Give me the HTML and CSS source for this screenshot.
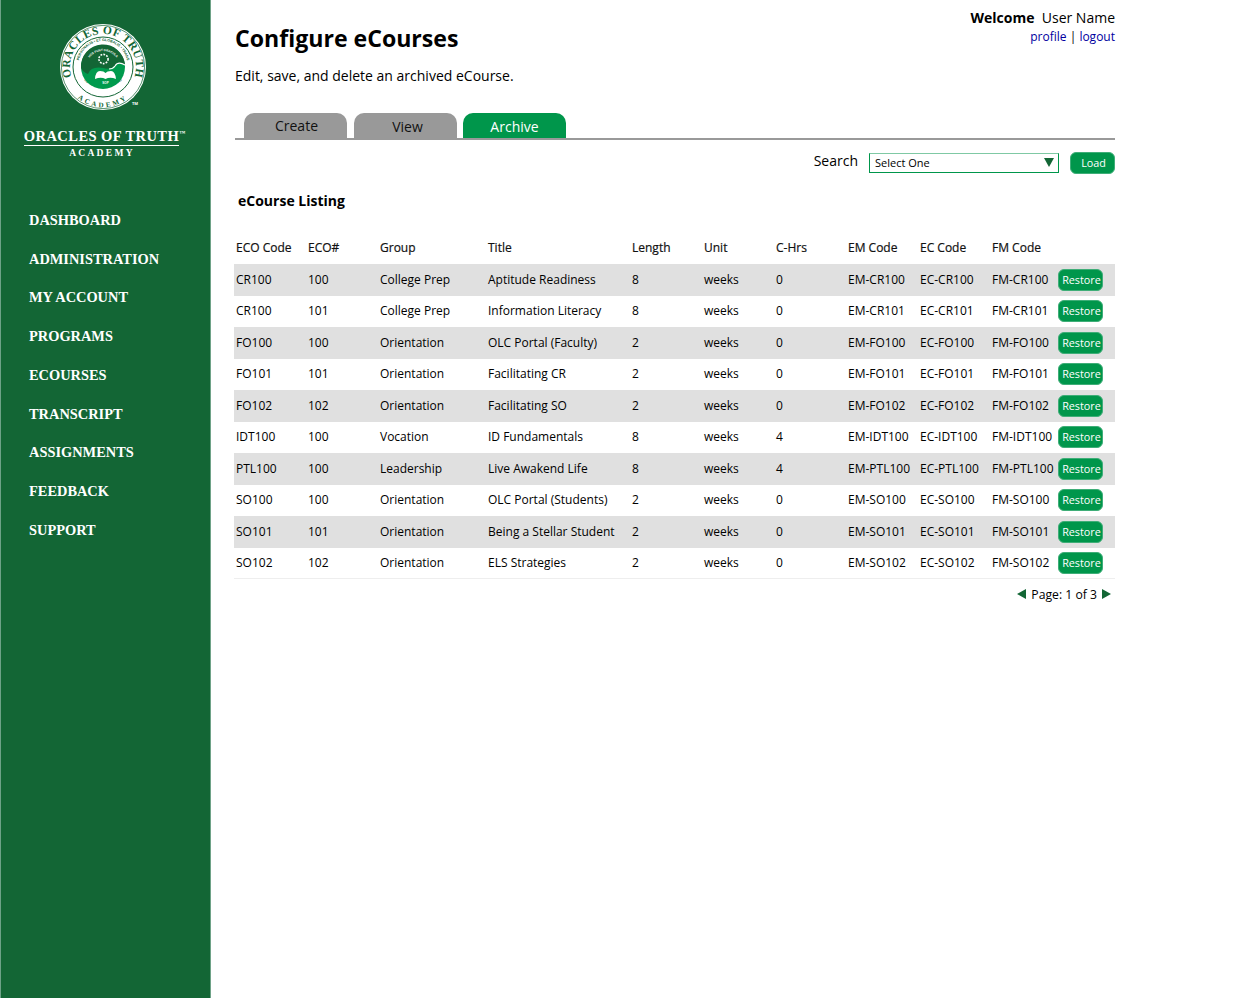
FILE: index.html
```html
<!DOCTYPE html>
<html lang="en">
<head>
    <meta charset="UTF-8">
    <title>Configure eCourses</title>
    <link rel="stylesheet" href="styles.css">
</head>
<body>
    <div class="sidebar">
        <svg class="seal" width="90" height="90" viewBox="0 0 90 90">
            <defs>
                <path id="arcTop" d="M15.1 58.9 A33 33 0 1 1 74.9 58.9"/>
                <path id="arcBottom" d="M14.4 70.7 A39.5 39.5 0 0 0 75.6 70.7"/>
                <path id="arcInner" d="M22 52 A24.5 24.5 0 1 1 68 52"/>
                <path id="arcInnerLow" d="M24 56 A27.5 27.5 0 0 0 66 56"/>
                <path id="arcMotto" d="M30 38 A17 17 0 0 1 60 38"/>
            </defs>
            <circle cx="45" cy="45" r="43" fill="#fff"/>
            <circle cx="45" cy="45" r="41.6" fill="none" stroke="#136635" stroke-width=".7"/>
            <circle cx="45" cy="45" r="30" fill="none" stroke="#136635" stroke-width="1"/>
            <text class="seal-text"><textPath href="#arcTop" startOffset="50%" text-anchor="middle">ORACLES OF TRUTH</textPath></text>
            <text class="seal-academy"><textPath href="#arcBottom" startOffset="50%" text-anchor="middle">ACADEMY</textPath></text>
            <text class="seal-small"><textPath href="#arcInner" startOffset="50%" text-anchor="middle">PERSONALIS • ET GLOBALIS • TRANS</textPath></text>
            <text class="seal-small"><textPath href="#arcInnerLow" startOffset="50%" text-anchor="middle">GENERATIO • DIVINITAS</textPath></text>
            <circle cx="45" cy="45" r="22" fill="#009a4d"/>
            <path d="M23 46 A22 22 0 0 1 67 43 Q60 39 57 44 Q52 48 45 46 Q33 44 30 52 Q25 50 23 46 Z" fill="#136635"/>
            <path d="M67 43 Q60 39 57 44 Q55 47 51 47" fill="none" stroke="#fff" stroke-width="1.2"/>
            <text class="seal-motto"><textPath href="#arcMotto" startOffset="50%" text-anchor="middle">HOS FUNT ORACULA</textPath></text>
            <circle cx="45.5" cy="37" r="4.6" fill="none" stroke="#fff" stroke-width="1.6" stroke-dasharray="1.8 1.2"/>
            <path d="M37 57 Q37.500 49 42 49 Q46 49 47.500 51 Q49 49 53 49 Q57 49 58 57 Q52 54.500 47.500 57 Q43 54.500 37 57 Z" fill="#fff"/>
            <text class="seal-motto" x="47.500" y="62" text-anchor="middle">SOP</text>
        </svg>
        <div class="tm-mark">TM</div>
        <div class="brand-name"><span class="brand-line">ORACLES OF TRUTH</span><sup>™</sup></div>
        <div class="brand-sub">ACADEMY</div>
        <nav class="nav">
            <a href="#">DASHBOARD</a>
            <a href="#">ADMINISTRATION</a>
            <a href="#">MY ACCOUNT</a>
            <a href="#">PROGRAMS</a>
            <a href="#">ECOURSES</a>
            <a href="#">TRANSCRIPT</a>
            <a href="#">ASSIGNMENTS</a>
            <a href="#">FEEDBACK</a>
            <a href="#">SUPPORT</a>
        </nav>
    </div>

    <div class="content">
        <div class="top-row">
            <div>
                <h1>Configure eCourses</h1>
                <p class="intro">Edit, save, and delete an archived eCourse.</p>
            </div>
            <div class="user-box">
                <div><b>Welcome</b>&nbsp; User Name</div>
                <div class="user-links"><a href="#">profile</a> | <a href="#">logout</a></div>
            </div>
        </div>

        <div class="tabs">
            <a class="tab" href="#">Create</a>
            <a class="tab tab-view" href="#">View</a>
            <a class="tab tab-active" href="#">Archive</a>
        </div>

        <div class="search-row">
            <span class="search-label">Search</span>
            <div class="select-box">Select One<span class="select-arrow"></span></div>
            <button class="btn load-btn">Load</button>
        </div>

        <h2>eCourse Listing</h2>

        <div class="row head">
            <span>ECO Code</span><span>ECO#</span><span>Group</span><span>Title</span><span>Length</span><span>Unit</span><span>C-Hrs</span><span>EM Code</span><span>EC Code</span><span>FM Code</span><span></span>
        </div>
        <div class="row shade">
            <span>CR100</span><span>100</span><span>College Prep</span><span>Aptitude Readiness</span><span>8</span><span>weeks</span><span>0</span><span>EM-CR100</span><span>EC-CR100</span><span>FM-CR100</span><span><button class="btn">Restore</button></span>
        </div>
        <div class="row">
            <span>CR100</span><span>101</span><span>College Prep</span><span>Information Literacy</span><span>8</span><span>weeks</span><span>0</span><span>EM-CR101</span><span>EC-CR101</span><span>FM-CR101</span><span><button class="btn">Restore</button></span>
        </div>
        <div class="row shade">
            <span>FO100</span><span>100</span><span>Orientation</span><span>OLC Portal (Faculty)</span><span>2</span><span>weeks</span><span>0</span><span>EM-FO100</span><span>EC-FO100</span><span>FM-FO100</span><span><button class="btn">Restore</button></span>
        </div>
        <div class="row">
            <span>FO101</span><span>101</span><span>Orientation</span><span>Facilitating CR</span><span>2</span><span>weeks</span><span>0</span><span>EM-FO101</span><span>EC-FO101</span><span>FM-FO101</span><span><button class="btn">Restore</button></span>
        </div>
        <div class="row shade">
            <span>FO102</span><span>102</span><span>Orientation</span><span>Facilitating SO</span><span>2</span><span>weeks</span><span>0</span><span>EM-FO102</span><span>EC-FO102</span><span>FM-FO102</span><span><button class="btn">Restore</button></span>
        </div>
        <div class="row">
            <span>IDT100</span><span>100</span><span>Vocation</span><span>ID Fundamentals</span><span>8</span><span>weeks</span><span>4</span><span>EM-IDT100</span><span>EC-IDT100</span><span>FM-IDT100</span><span><button class="btn">Restore</button></span>
        </div>
        <div class="row shade">
            <span>PTL100</span><span>100</span><span>Leadership</span><span>Live Awakend Life</span><span>8</span><span>weeks</span><span>4</span><span>EM-PTL100</span><span>EC-PTL100</span><span>FM-PTL100</span><span><button class="btn">Restore</button></span>
        </div>
        <div class="row">
            <span>SO100</span><span>100</span><span>Orientation</span><span>OLC Portal (Students)</span><span>2</span><span>weeks</span><span>0</span><span>EM-SO100</span><span>EC-SO100</span><span>FM-SO100</span><span><button class="btn">Restore</button></span>
        </div>
        <div class="row shade">
            <span>SO101</span><span>101</span><span>Orientation</span><span>Being a Stellar Student</span><span>2</span><span>weeks</span><span>0</span><span>EM-SO101</span><span>EC-SO101</span><span>FM-SO101</span><span><button class="btn">Restore</button></span>
        </div>
        <div class="row last">
            <span>SO102</span><span>102</span><span>Orientation</span><span>ELS Strategies</span><span>2</span><span>weeks</span><span>0</span><span>EM-SO102</span><span>EC-SO102</span><span>FM-SO102</span><span><button class="btn">Restore</button></span>
        </div>

        <div class="pager">
            <span class="arrow-left"></span>
            <span>Page: 1 of 3</span>
            <span class="arrow-right"></span>
        </div>
    </div>
</body>
</html>
```

FILE: styles.css
```css
html, body {
    height: 100%;
    margin: 0;
    overflow: hidden;
}
body {
    display: flex;
    font-family: "Open Sans", sans-serif;
    font-size: 14px;
    color: #000;
    background-color: #fff;
}
.sidebar {
    position: relative;
    box-sizing: border-box;
    width: 211px;
    height: 998px;
    flex-shrink: 0;
    padding-top: 22px;
    display: flex;
    flex-direction: column;
    align-items: center;
    background-color: #136635;
    border-left: 1px solid #6ea287;
    border-right: 1px solid #6ea287;
    color: #fff;
}
.seal {
    display: block;
    margin-left: -6px;
}
.seal-text {
    font-family: "Liberation Serif", serif;
    font-size: 11.5px;
    font-weight: bold;
    letter-spacing: .4px;
    fill: #136635;
}
.seal-academy {
    font-family: "Liberation Serif", serif;
    font-size: 7px;
    font-weight: bold;
    letter-spacing: 2.6px;
    fill: #136635;
}
.seal-small {
    font-family: "Liberation Sans", sans-serif;
    font-size: 3.6px;
    font-weight: bold;
    fill: #136635;
}
.seal-motto {
    font-family: "Liberation Sans", sans-serif;
    font-size: 3px;
    font-weight: bold;
    fill: #fff;
}
.tm-mark {
    position: absolute;
    top: 101px;
    left: 131px;
    font-size: 4px;
    font-weight: bold;
}
.brand-name {
    margin-top: 16px;
    margin-left: -2px;
    font-family: "Liberation Serif", serif;
    font-size: 14.5px;
    line-height: 17px;
    font-weight: bold;
    letter-spacing: .45px;
    white-space: nowrap;
}
.brand-line {
    display: inline-block;
    border-bottom: 1px solid #fff;
}
.brand-name sup {
    font-size: 6px;
    line-height: 0;
    letter-spacing: 0;
}
.brand-sub {
    margin-top: 1px;
    margin-right: 7px;
    font-family: "Liberation Serif", serif;
    font-size: 9.5px;
    line-height: 12px;
    font-weight: bold;
    letter-spacing: 2.3px;
}
.nav {
    align-self: stretch;
    margin-top: 49.8px;
    padding-left: 28px;
    display: flex;
    flex-direction: column;
}
.nav a {
    height: 38.75px;
    font-family: "Liberation Serif", serif;
    font-size: 14.4px;
    line-height: 22px;
    font-weight: bold;
    color: #fff;
    text-decoration: none;
    white-space: nowrap;
}
.content {
    box-sizing: border-box;
    width: 880px;
    margin-left: 24px;
}
.top-row {
    display: flex;
    justify-content: space-between;
    height: 113px;
}
h1 {
    margin: 21px 0 0;
    font-size: 23.1px;
    line-height: 35px;
    font-weight: 700;
}
.intro {
    margin: 10px 0 0;
    font-size: 14px;
    line-height: 20px;
}
.user-box {
    padding-top: 8px;
    text-align: right;
    line-height: 20px;
}
.user-links {
    font-size: 12px;
    line-height: 18px;
}
.user-links a {
    color: #0000a0;
    text-decoration: none;
}
.tabs {
    box-sizing: border-box;
    height: 27px;
    padding-left: 9px;
    display: flex;
    gap: 7px;
    border-bottom: 2px solid #999;
}
.tab {
    width: 103px;
    height: 25px;
    padding-left: 2px;
    box-sizing: border-box;
    border-radius: 10px 10px 0 0;
    background-color: #999;
    color: #111;
    text-align: center;
    line-height: 26px;
    text-decoration: none;
}
.tab-view {
    padding-left: 4px;
    line-height: 28px;
}
.tab-active {
    margin-left: -1px;
    padding-left: 0;
    background-color: #00964b;
    color: #fff;
    line-height: 28px;
}
.search-row {
    display: flex;
    justify-content: flex-end;
    align-items: center;
    height: 24px;
    margin-top: 11px;
}
.search-label {
    margin-right: 11px;
    margin-top: -6px;
}
.select-box {
    box-sizing: border-box;
    position: relative;
    width: 190px;
    height: 20px;
    margin-right: 11px;
    padding-left: 5px;
    border: 1px solid #00964b;
    border-top-color: #7fc9a4;
    font-size: 11px;
    line-height: 18px;
}
.select-arrow {
    position: absolute;
    top: 4px;
    right: 4px;
    border-left: 5px solid transparent;
    border-right: 5px solid transparent;
    border-top: 9px solid #136635;
}
.btn {
    box-sizing: border-box;
    border: 1px solid #3fae78;
    border-radius: 6px;
    background-color: #00964b;
    color: #fff;
    font-family: "Open Sans", sans-serif;
    font-size: 10.8px;
    line-height: 14px;
    padding: 0 0 0 2px;
    width: 45px;
    height: 22px;
    cursor: pointer;
}
.row .btn {
    display: block;
    margin-top: 1px;
}
h2 {
    margin: 15px 0 0 3px;
    font-size: 14px;
    line-height: 22px;
    font-weight: 700;
}
.row {
    display: grid;
    grid-template-columns: 72px 72px 108px 144px 72px 72px 72px 72px 72px 66px 57px;
    align-items: center;
    height: 31.5px;
    margin-left: -1px;
    padding-left: 2px;
    font-size: 12px;
    box-sizing: border-box;
}
.row span {
    padding-bottom: 1px;
    white-space: nowrap;
}
.head {
    height: 33px;
    margin-top: 19px;
    font-weight: 500;
    color: #111;
    -webkit-text-stroke: 0.2px #111;
}
.shade {
    background-color: #e0e0e0;
}
.last {
    border-bottom: 1px solid #eee;
}
.pager {
    display: flex;
    justify-content: flex-end;
    align-items: center;
    gap: 5px;
    height: 30px;
    padding-right: 4px;
    font-size: 12.2px;
}
.arrow-left {
    border-top: 5px solid transparent;
    border-bottom: 5px solid transparent;
    border-right: 9px solid #136635;
}
.arrow-right {
    border-top: 5px solid transparent;
    border-bottom: 5px solid transparent;
    border-left: 9px solid #136635;
}
```
